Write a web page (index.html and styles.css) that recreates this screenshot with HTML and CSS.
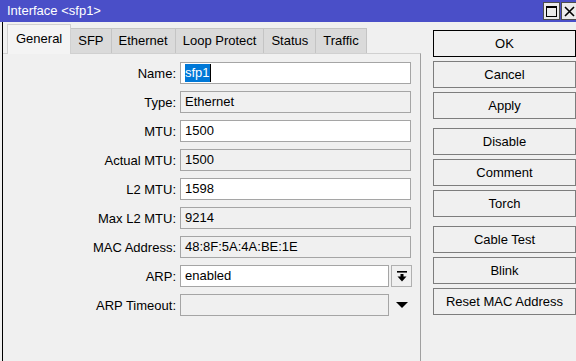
FILE: index.html
```html
<!DOCTYPE html>
<html lang="en">
<head>
    <meta charset="UTF-8">
    <title>Interface &lt;sfp1&gt;</title>
    <link rel="stylesheet" href="styles.css">
</head>
<body>
    <div class="window">
        <div class="titlebar">
            <span class="title">Interface &lt;sfp1&gt;</span>
            <div class="title-buttons">
                <span class="tb-btn">
                    <svg width="11" height="11" viewBox="0 0 11 11"><rect x="0.5" y="0.5" width="10" height="10" fill="none" stroke="#000"/><rect x="0" y="0" width="11" height="2" fill="#000"/></svg>
                </span>
                <span class="tb-btn">
                    <svg width="11" height="11" viewBox="0 0 11 11"><path d="M1 1 L10 10 M10 1 L1 10" stroke="#000" stroke-width="1.6"/></svg>
                </span>
            </div>
        </div>
        <div class="main">
            <div class="left">
                <div class="tabs">
                    <span class="tab active">General</span>
                    <span class="tab">SFP</span>
                    <span class="tab">Ethernet</span>
                    <span class="tab">Loop Protect</span>
                    <span class="tab">Status</span>
                    <span class="tab">Traffic</span>
                </div>
                <div class="panel">
                    <div class="row">
                        <label>Name:</label>
                        <div class="field edit"><span class="selected">sfp1</span><span class="caret"></span></div>
                    </div>
                    <div class="row">
                        <label>Type:</label>
                        <div class="field">Ethernet</div>
                    </div>
                    <div class="row">
                        <label>MTU:</label>
                        <div class="field edit">1500</div>
                    </div>
                    <div class="row">
                        <label>Actual MTU:</label>
                        <div class="field">1500</div>
                    </div>
                    <div class="row">
                        <label>L2 MTU:</label>
                        <div class="field edit">1598</div>
                    </div>
                    <div class="row">
                        <label>Max L2 MTU:</label>
                        <div class="field">9214</div>
                    </div>
                    <div class="row">
                        <label>MAC Address:</label>
                        <div class="field">48:8F:5A:4A:BE:1E</div>
                    </div>
                    <div class="row">
                        <label>ARP:</label>
                        <div class="field edit short">enabled</div>
                        <span class="drop-btn">
                            <svg width="10" height="11" viewBox="0 0 10 11"><rect x="0" y="0" width="10" height="1.6" fill="#000"/><rect x="3.5" y="3" width="3" height="3" fill="#000"/><polygon points="0.5,5.5 9.5,5.5 5,10.5" fill="#000"/></svg>
                        </span>
                    </div>
                    <div class="row">
                        <label>ARP Timeout:</label>
                        <div class="field short"></div>
                        <span class="drop-arrow">
                            <svg width="12" height="6" viewBox="0 0 12 6"><polygon points="0,0 12,0 6,6" fill="#000"/></svg>
                        </span>
                    </div>
                </div>
            </div>
            <div class="actions">
                <div class="group">
                    <button class="default">OK</button>
                    <button>Cancel</button>
                    <button>Apply</button>
                </div>
                <div class="group">
                    <button>Disable</button>
                    <button>Comment</button>
                    <button>Torch</button>
                </div>
                <div class="group">
                    <button>Cable Test</button>
                    <button>Blink</button>
                    <button>Reset MAC Address</button>
                </div>
            </div>
        </div>
    </div>
</body>
</html>
```
FILE: styles.css
```css
body {
    margin: 0;
    font-family: "Liberation Sans", Arial, sans-serif;
    font-size: 13px;
    color: #000;
    background-color: #f0f0f0;
}
.window {
    width: 576px;
    height: 361px;
    overflow: hidden;
    display: flex;
    flex-direction: column;
}
.titlebar {
    height: 22px;
    background-color: #4a4fc8;
    display: flex;
    align-items: flex-start;
    flex-shrink: 0;
}
.title {
    color: #fff;
    padding-left: 7px;
    line-height: 22px;
}
.title-buttons {
    margin-left: auto;
    margin-right: -2px;
    padding-top: 2px;
    display: flex;
    gap: 1px;
}
.tb-btn {
    width: 17px;
    height: 18px;
    box-sizing: border-box;
    border: 1px solid #4d4d4d;
    background-color: #ebebeb;
    display: flex;
    align-items: center;
    justify-content: center;
}
.main {
    flex: 1;
    display: flex;
}
.left {
    width: 418px;
    margin-left: 2px;
    border-left: 1px solid #000;
    display: flex;
    flex-direction: column;
}
.tabs {
    height: 31px;
    box-sizing: border-box;
    padding-left: 4px;
    display: flex;
    align-items: flex-end;
}
.tab {
    height: 25px;
    box-sizing: border-box;
    padding: 0 7px;
    line-height: 23px;
    border: 1px solid #c4c4c4;
    border-bottom: none;
    background-color: #dadada;
    margin-left: -1px;
}
.tab.active {
    height: 30px;
    line-height: 28px;
    padding: 0 8px;
    background-color: #f4f4f4;
    border-color: #d0d0d0;
    margin: 0 0 -1px 0;
    position: relative;
    z-index: 1;
}
.panel {
    flex: 1;
    border-top: 1px solid #d0d0d0;
    border-right: 1px solid #a0a0a0;
    padding-top: 8px;
    display: flex;
    flex-direction: column;
    gap: 7px;
}
.row {
    display: flex;
    align-items: center;
    height: 22px;
}
.row label {
    width: 173px;
    text-align: right;
    margin-right: 4px;
}
.field {
    width: 231px;
    height: 22px;
    box-sizing: border-box;
    border: 1px solid #a5a5a5;
    padding-left: 4px;
    line-height: 20px;
    display: flex;
    align-items: center;
}
.field.edit {
    background-color: #fff;
}
.field.short {
    width: 209px;
}
.selected {
    background-color: #0078d7;
    color: #fff;
    line-height: 18px;
}
.caret {
    width: 1px;
    height: 18px;
    background-color: #000;
}
.drop-btn {
    width: 21px;
    height: 22px;
    box-sizing: border-box;
    margin-left: 2px;
    border: 1px solid #b0b0b0;
    display: flex;
    align-items: center;
    justify-content: center;
}
.drop-arrow {
    margin-left: 7px;
    display: flex;
    align-items: center;
}
.actions {
    margin-left: 12px;
    padding-top: 8px;
    width: 143px;
    display: flex;
    flex-direction: column;
    gap: 9px;
}
.group {
    display: flex;
    flex-direction: column;
    gap: 4px;
}
button {
    height: 27px;
    width: 143px;
    padding: 0;
    font-family: "Liberation Sans", Arial, sans-serif;
    font-size: 13px;
    color: #000;
    background-color: #f0f0f0;
    border: 1px solid #7d7d7d;
    border-radius: 0;
}
button.default {
    border-color: #000;
}
```
